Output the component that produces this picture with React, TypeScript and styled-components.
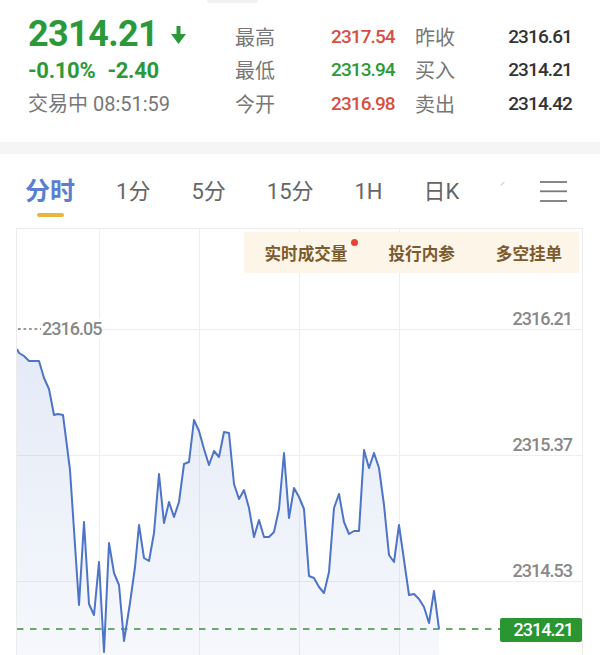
import { Fragment } from "react";
import styled, { createGlobalStyle } from "styled-components";

const GREEN = "#2b993a";
const RED = "#d64f45";

const GlobalStyle = createGlobalStyle`
  html, body {
    margin: 0;
    padding: 0;
    background: #fff;
  }
  body {
    font-family: Roboto, "Noto Sans CJK SC", sans-serif;
  }
`;

const stats = [
  { label: "最高", value: "2317.54", tone: RED, label2: "昨收", value2: "2316.61" },
  { label: "最低", value: "2313.94", tone: GREEN, label2: "买入", value2: "2314.21" },
  { label: "今开", value: "2316.98", tone: RED, label2: "卖出", value2: "2314.42" },
];

const tabs = ["分时", "1分", "5分", "15分", "1H", "日K"];

const axis = [
  { text: "2316.21", top: 80 },
  { text: "2315.37", top: 206 },
  { text: "2314.53", top: 332 },
];

// sampled from the intraday line, page coordinates
const points: [number, number][] = [
  [17, 349], [19, 353], [24, 356], [29, 361], [39, 361], [44, 378], [49, 389],
  [54, 415], [58, 414], [63, 415], [70, 470], [79, 605], [84, 522], [89, 604],
  [94, 615], [99, 562], [104, 652], [109, 543], [114, 573], [119, 585], [124, 641],
  [130, 603], [135, 567], [139, 525], [144, 558], [149, 561], [154, 533], [159, 474],
  [164, 523], [169, 502], [174, 517], [179, 502], [184, 464], [189, 462], [194, 420],
  [199, 431], [204, 449], [209, 465], [214, 451], [219, 457], [224, 432], [229, 433],
  [234, 484], [239, 499], [244, 490], [249, 508], [254, 537], [259, 520], [264, 537],
  [269, 537], [274, 532], [279, 509], [284, 453], [289, 518], [294, 488], [299, 497],
  [304, 509], [309, 576], [314, 578], [319, 587], [324, 593], [329, 572], [334, 508],
  [339, 494], [344, 522], [349, 534], [354, 531], [359, 531], [364, 450], [369, 468],
  [374, 453], [379, 468], [384, 505], [389, 555], [394, 562], [399, 525], [404, 560],
  [409, 595], [414, 594], [419, 599], [424, 607], [429, 623], [434, 591], [439, 629],
];

const linePath = points.map(([x, y], i) => `${i ? "L" : "M"}${x},${y}`).join(" ");
const areaPath = `${linePath} L439,660 L17,660 Z`;

export default function App() {
  return (
    <Page>
      <GlobalStyle />
      <Header>
        <TopPill />
        <Quote>
          <PriceRow>
            <Price>2314.21</Price>
            <DownArrow width="15" height="18" viewBox="0 0 15 18">
              <rect x="5.5" y="0" width="4" height="10" fill={GREEN} />
              <polygon points="0,8 15,8 7.5,18" fill={GREEN} />
            </DownArrow>
          </PriceRow>
          <ChangeRow>
            <span>-0.10%</span>
            <span>-2.40</span>
          </ChangeRow>
          <Status>交易中 08:51:59</Status>
        </Quote>
        <Stats>
          {stats.map((row) => (
            <Fragment key={row.label}>
              <StatLabel>{row.label}</StatLabel>
              <StatValue $tone={row.tone}>{row.value}</StatValue>
              <StatLabel>{row.label2}</StatLabel>
              <StatValue $tone="#333" $end>{row.value2}</StatValue>
            </Fragment>
          ))}
        </Stats>
      </Header>

      <GrayBand />

      <TabBar>
        {tabs.map((t, i) => (
          <Tab key={t} $active={i === 0}>
            {t}
            {i === 0 && <TabMark />}
          </Tab>
        ))}
        <Tick width="5" height="5" viewBox="0 0 5 5">
          <line x1="0.8" y1="4.4" x2="4.4" y2="1" stroke="#cfcfcf" strokeWidth="1.2" />
        </Tick>
        <MenuIcon width="27" height="22" viewBox="0 0 27 22">
          <line x1="0" y1="1" x2="27" y2="1" stroke="#7a7a7a" strokeWidth="1.8" />
          <line x1="0" y1="10.3" x2="27" y2="10.3" stroke="#7a7a7a" strokeWidth="1.8" />
          <line x1="0" y1="20" x2="27" y2="20" stroke="#7a7a7a" strokeWidth="1.8" />
        </MenuIcon>
      </TabBar>

      <Chart>
        <ChartSvg width="565" height="426" viewBox="17 229 565 426">
          <defs>
            <linearGradient id="area" x1="0" y1="0" x2="0" y2="1">
              <stop offset="0" stopColor="#4d74c6" stopOpacity="0.15" />
              <stop offset="1" stopColor="#4d74c6" stopOpacity="0.05" />
            </linearGradient>
          </defs>
          {[99.5, 199.5, 299.5, 399.5].map((x) => (
            <line key={x} x1={x} y1="229" x2={x} y2="660" stroke="#eeeeee" strokeWidth="1" />
          ))}
          {[329.5, 455.5, 581.5].map((y) => (
            <line key={y} x1="17" y1={y} x2="583" y2={y} stroke="#eeeeee" strokeWidth="1" />
          ))}
          <path d={areaPath} fill="url(#area)" />
          <line x1="17" y1="629" x2="583" y2="629" stroke="#66ab6a" strokeWidth="2" strokeDasharray="6.5 6.5" />
          <path d={linePath} fill="none" stroke="#4d74c6" strokeWidth="2" strokeLinejoin="round" />
        </ChartSvg>

        <Overlays>
          <Item>
            实时成交量
            <Dot />
          </Item>
          <Divider />
          <Item>投行内参</Item>
          <Divider />
          <Item>多空挂单</Item>
        </Overlays>

        <PrevClose>
          <Dots />
          2316.05
        </PrevClose>

        {axis.map((a) => (
          <AxisLabel key={a.text} $top={a.top}>
            {a.text}
          </AxisLabel>
        ))}

        <PriceTag>2314.21</PriceTag>
      </Chart>
    </Page>
  );
}

const Page = styled.div`
  width: 600px;
  height: 655px;
  overflow: hidden;
  background: #fff;
`;

const Header = styled.header`
  position: relative;
  display: flex;
  height: 142px;
`;

const TopPill = styled.div`
  position: absolute;
  left: 207px;
  top: 0;
  width: 51px;
  height: 3px;
  border-radius: 0 0 3px 3px;
  background: #f1f1f1;
`;

const Quote = styled.div`
  width: 235px;
  flex-shrink: 0;
  box-sizing: border-box;
  padding: 14px 0 0 28px;
  display: flex;
  flex-direction: column;
`;

const PriceRow = styled.div`
  display: flex;
  align-items: center;
  height: 40px;
`;

const Price = styled.span`
  font-size: 36px;
  line-height: 40px;
  font-weight: 700;
  letter-spacing: -0.6px;
  color: ${GREEN};
`;

const DownArrow = styled.svg`
  margin-left: 13px;
  margin-top: 1px;
`;

const ChangeRow = styled.div`
  display: flex;
  gap: 12px;
  margin-top: 4px;
  font-size: 22px;
  line-height: 26px;
  font-weight: 700;
  letter-spacing: -0.3px;
  color: ${GREEN};
`;

const Status = styled.div`
  margin-top: 8px;
  font-size: 20px;
  line-height: 24px;
  color: #777;
`;

const Stats = styled.div`
  flex: 1;
  display: grid;
  grid-template-columns: 96px 84px 1fr auto;
  grid-auto-rows: 33.3px;
  align-items: center;
  padding: 20px 28px 0 0;
  align-content: start;
`;

const StatLabel = styled.span`
  font-size: 20px;
  color: #777;
`;

const StatValue = styled.span<{ $tone: string; $end?: boolean }>`
  font-size: 19px;
  font-weight: 500;
  letter-spacing: -0.9px;
  color: ${(p) => p.$tone};
  justify-self: ${(p) => (p.$end ? "end" : "start")};
`;

const GrayBand = styled.div`
  height: 12px;
  background: #f5f5f5;
`;

const TabBar = styled.nav`
  display: flex;
  align-items: flex-start;
  height: 74px;
  box-sizing: border-box;
  padding: 23px 33px 0 25px;
`;

const Tab = styled.div<{ $active?: boolean }>`
  display: flex;
  flex-direction: column;
  align-items: center;
  margin-right: 41px;
  font-size: ${(p) => (p.$active ? "25px" : "22px")};
  font-weight: ${(p) => (p.$active ? 700 : 400)};
  line-height: 30px;
  color: ${(p) => (p.$active ? "#5a7fd0" : "#666")};
`;

const TabMark = styled.span`
  margin-top: 6px;
  width: 27px;
  height: 4px;
  border-radius: 2px;
  background: #e9b53c;
`;

const Tick = styled.svg`
  margin-top: 4px;
`;

const MenuIcon = styled.svg`
  margin-left: auto;
  margin-top: 4px;
`;

const Chart = styled.section`
  position: relative;
  margin-left: 16px;
  width: 567px;
  height: 427px;
  box-sizing: border-box;
  border: 1px solid #ececec;
  border-bottom: none;
  overflow: hidden;
`;

const ChartSvg = styled.svg`
  position: absolute;
  left: 0;
  top: 0;
  display: block;
`;

const Overlays = styled.div`
  position: absolute;
  left: 227px;
  top: 3px;
  width: 335px;
  height: 41px;
  display: flex;
  align-items: center;
  white-space: nowrap;
  background: #fdf6e8;
  border-radius: 2px;
`;

const Item = styled.span`
  position: relative;
  padding: 0 20.5px;
  font-size: 16.6px;
  font-weight: 600;
  line-height: 24px;
  color: #7b5a2d;
  font-family: "Noto Sans CJK SC", sans-serif;
`;

const Dot = styled.span`
  position: absolute;
  right: 10px;
  top: -2px;
  width: 7px;
  height: 7px;
  border-radius: 50%;
  background: #e2443a;
`;

const Divider = styled.span`
  width: 1px;
  height: 28px;
  background: #efe3cc;
`;

const PrevClose = styled.div`
  position: absolute;
  left: 1px;
  top: 90px;
  display: flex;
  align-items: center;
  background: #fff;
  font-size: 18px;
  font-weight: 500;
  line-height: 20px;
  letter-spacing: -1px;
  color: #888;
`;

const Dots = styled.span`
  width: 23px;
  height: 2px;
  margin-right: 1px;
  background-image: linear-gradient(to right, #9a9a9a 45%, transparent 45%);
  background-size: 5.5px 2px;
`;

const AxisLabel = styled.div<{ $top: number }>`
  position: absolute;
  right: 10px;
  top: ${(p) => p.$top}px;
  font-size: 18px;
  font-weight: 500;
  line-height: 20px;
  letter-spacing: -1px;
  color: #888;
`;

const PriceTag = styled.div`
  position: absolute;
  left: 483px;
  top: 389px;
  width: 82px;
  height: 24px;
  box-sizing: border-box;
  padding-right: 9px;
  border-radius: 2px;
  background: #2a9632;
  color: #fff;
  font-size: 18px;
  font-weight: 500;
  line-height: 24px;
  letter-spacing: -1px;
  text-align: right;
`;
